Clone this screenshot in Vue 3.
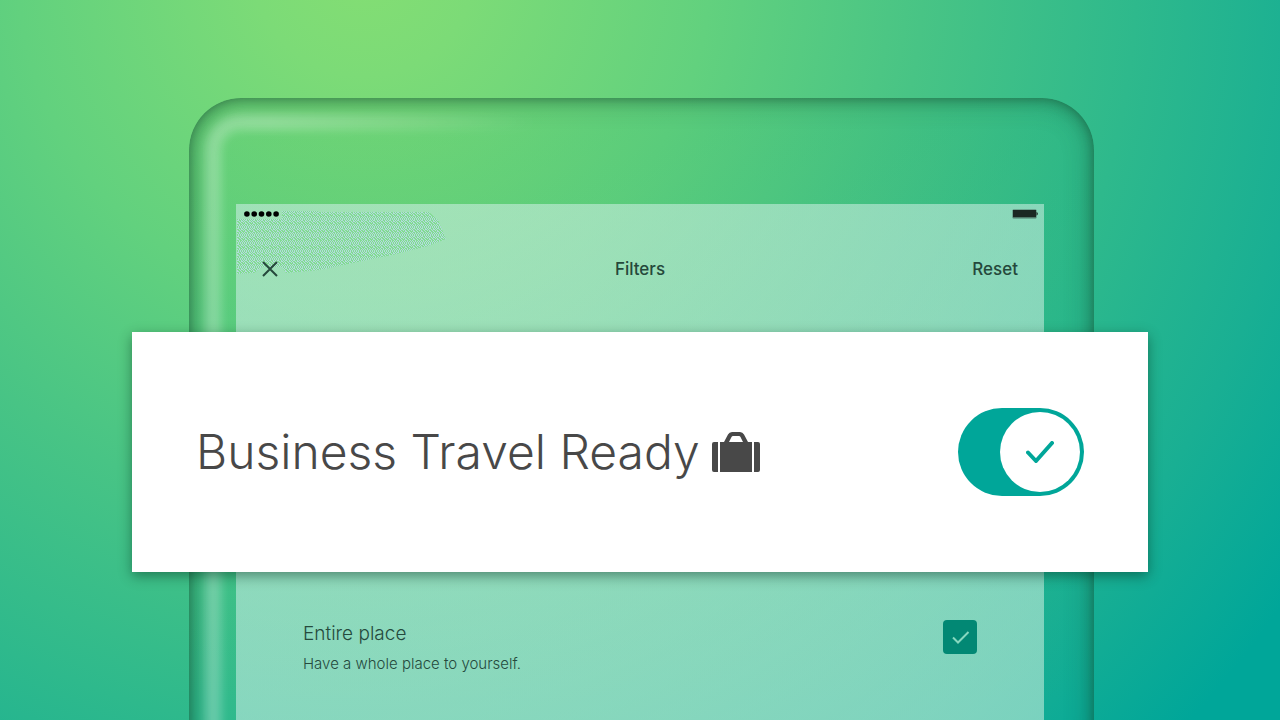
<script setup>
import { ref } from 'vue'

const businessReady = ref(true)
const entirePlace = ref(true)
</script>

<template>
  <main class="stage">
    <section class="tablet">
      <div class="screen">
        <div class="status">
          <svg class="grain" width="210" height="72" viewBox="0 0 210 72" aria-hidden="true">
            <defs>
              <pattern id="dither" width="8" height="8" patternUnits="userSpaceOnUse" shape-rendering="crispEdges">
                <rect width="8" height="8" fill="#82dc91" />
                <path d="M0 0h1v1h-1zM2 0h1v2h-1zM4 0h1v1h-1zM6 0h1v1h-1zM1 1h1v1h-1zM5 1h1v2h-1zM7 1h1v1h-1zM0 2h1v1h-1zM3 2h1v1h-1zM6 2h1v1h-1zM1 3h1v2h-1zM4 3h1v1h-1zM7 3h1v1h-1zM2 4h1v1h-1zM5 4h1v1h-1zM0 5h1v1h-1zM3 5h1v2h-1zM6 5h1v1h-1zM1 6h1v1h-1zM5 6h1v1h-1zM7 6h1v1h-1zM0 7h1v1h-1zM2 7h1v1h-1zM4 7h1v1h-1zM6 7h1v1h-1z" fill="#b2dcdc" />
              </pattern>
            </defs>
            <path d="M1 8H46V0H82V1H193L202 9L210 28L192 35L156 44L112 53L84 59L50 62L46 56H26L18 62L1 63Z" fill="url(#dither)" />
          </svg>
          <svg class="signal" width="36" height="6" viewBox="0 0 36 6" role="img" aria-label="Signal">
            <circle v-for="n in 5" :key="n" :cx="n * 7.3 - 4.4" cy="3" r="2.8" />
          </svg>
          <svg class="battery" width="26" height="10" viewBox="0 0 26 10" role="img" aria-label="Battery">
            <rect x="0.5" y="0.5" width="24" height="9" rx="1" fill="#4f796a" />
            <rect x="1" y="1" width="23" height="7" fill="#1b2823" />
            <path d="M24.5 3c1.8 .6 1.8 3 0 3.6z" fill="#1b2823" />
          </svg>
        </div>
        <header class="nav">
          <button class="close" type="button" aria-label="Close">
            <svg width="16" height="16" viewBox="0 0 16 16"><path d="M1 1L15 15M15 1L1 15" /></svg>
          </button>
          <h1>Filters</h1>
          <button class="reset" type="button">Reset</button>
        </header>
        <div class="option">
          <label for="entire">
            <span class="name">Entire place</span>
            <span class="hint">Have a whole place to yourself.</span>
          </label>
          <span class="tick">
            <input id="entire" v-model="entirePlace" type="checkbox" />
            <svg v-if="entirePlace" width="34" height="34" viewBox="0 0 34 34"><path d="M10 17.5L15 22.5L25.5 12" /></svg>
          </span>
        </div>
      </div>
    </section>

    <section class="card">
      <label class="title" for="business">
        Business Travel Ready
        <svg class="case" width="48" height="40" viewBox="0 0 48 40" aria-hidden="true">
          <path d="M2 10H6V40H2Q0 40 0 38V12Q0 10 2 10ZM42 10H46Q48 10 48 12V38Q48 40 46 40H42Z" />
          <path fill-rule="evenodd" d="M8 10H12L16 2.5Q17.3 0 20 0H28Q30.7 0 32 2.5L36 10H40V40H8ZM17 10H31L28.5 5Q28 4 27 4H21Q20 4 19.5 5Z" />
        </svg>
      </label>
      <span class="toggle" :class="{ on: businessReady }">
        <input id="business" v-model="businessReady" type="checkbox" role="switch" />
        <span class="knob">
          <svg v-if="businessReady" width="28" height="22" viewBox="0 0 28 22"><path d="M2 11.5L10 20L26 2" /></svg>
        </span>
      </span>
    </section>
  </main>
</template>

<style>
body {
  margin: 0;
}
</style>

<style scoped>
.stage {
  display: grid;
  min-height: 100vh;
  overflow: hidden;
  font-family: Inter, "Liberation Sans", sans-serif;
  color: #254a3d;
  background: radial-gradient(circle 1120px at 364px -36px, #84de73 0%, #7cdb77 10%, #62d17e 31%, #48c485 50%, #2eb98c 69%, #19af93 85%, #00a699 100%);
}

.tablet {
  grid-area: 1 / 1;
  position: relative;
  margin: 98px 186px 0 189px;
  padding: 106px 50px 0 47px;
  border-radius: 52px 52px 0 0;
  overflow: hidden;
  background: linear-gradient(rgba(0, 150, 90, 0.09), rgba(0, 150, 90, 0));
}

.tablet::before,
.tablet::after {
  content: "";
  position: absolute;
  pointer-events: none;
}

.tablet::before {
  inset: 0 0 -60px;
  border-radius: 52px;
  outline: 16px solid rgba(255, 255, 255, 0.28);
  outline-offset: -32px;
  filter: blur(5px);
  mask-image: linear-gradient(to right, #000 0, #000 80px, transparent 350px);
}

.tablet::after {
  inset: 0 0 -60px;
  border-radius: 52px;
  box-shadow: inset 0 0 28px rgba(20, 70, 45, 0.45), inset 0 0 12px rgba(20, 70, 45, 0.5);
}

.screen {
  position: relative;
  z-index: 1;
  min-height: 100%;
  background: linear-gradient(135deg, rgba(226, 244, 252, 0.48), rgba(228, 248, 232, 0.5));
}

.status {
  position: relative;
  display: flex;
  justify-content: space-between;
  align-items: center;
  height: 20px;
  padding: 0 6px 0 8px;
}

.grain {
  position: absolute;
  left: 0;
  top: 7px;
}

.signal {
  position: relative;
  fill: #000;
}

.nav {
  position: relative;
  display: grid;
  grid-template-columns: 1fr auto 1fr;
  align-items: center;
  height: 90px;
  padding: 0 26px;
}

.nav h1,
.reset {
  margin: 0;
  font: 500 17px/24px Inter, "Liberation Sans", sans-serif;
  color: #25483b;
}

button {
  padding: 0;
  border: 0;
  background: none;
  cursor: pointer;
}

.close {
  display: flex;
  justify-self: start;
}

.close path {
  fill: none;
  stroke: #25483b;
  stroke-width: 2;
}

.reset {
  justify-self: end;
}

.option {
  display: flex;
  justify-content: space-between;
  align-items: flex-start;
  margin-top: 306px;
  padding: 0 67px;
}

.option label {
  display: grid;
  gap: 6px;
}

.name {
  font-size: 19px;
  font-weight: 300;
  line-height: 28px;
}

.hint {
  font-size: 15px;
  font-weight: 300;
  line-height: 20px;
}

.tick,
.toggle {
  display: grid;
}

.tick > *,
.toggle > * {
  grid-area: 1 / 1;
}

.tick input,
.toggle input {
  appearance: none;
  margin: 0;
  cursor: pointer;
}

.tick input {
  width: 34px;
  height: 34px;
  border-radius: 4px;
  background: #028874;
}

.tick svg {
  pointer-events: none;
  fill: none;
  stroke: #86d8bf;
  stroke-width: 2;
}

.card {
  grid-area: 1 / 1;
  z-index: 2;
  align-self: start;
  display: flex;
  justify-content: space-between;
  align-items: center;
  height: 240px;
  margin: 332px 132px 0;
  padding: 0 64px;
  box-sizing: border-box;
  background: #fff;
  box-shadow: 0 4px 12px rgba(0, 40, 25, 0.45);
}

.title {
  display: flex;
  align-items: center;
  gap: 12px;
  font-size: 48px;
  font-weight: 300;
  line-height: 64px;
  white-space: nowrap;
  color: #484848;
}

.case {
  fill: #484848;
}

.toggle input {
  width: 126px;
  height: 88px;
  border-radius: 44px;
  background: #b0b5b4;
}

.toggle.on input {
  background: #00a699;
}

.knob {
  display: grid;
  place-items: center;
  align-self: center;
  width: 80px;
  height: 80px;
  margin: 0 4px;
  border-radius: 50%;
  background: #fff;
  pointer-events: none;
}

.toggle.on .knob {
  justify-self: end;
}

.knob path {
  fill: none;
  stroke: #00a699;
  stroke-width: 4;
  stroke-linecap: round;
  stroke-linejoin: round;
}
</style>
